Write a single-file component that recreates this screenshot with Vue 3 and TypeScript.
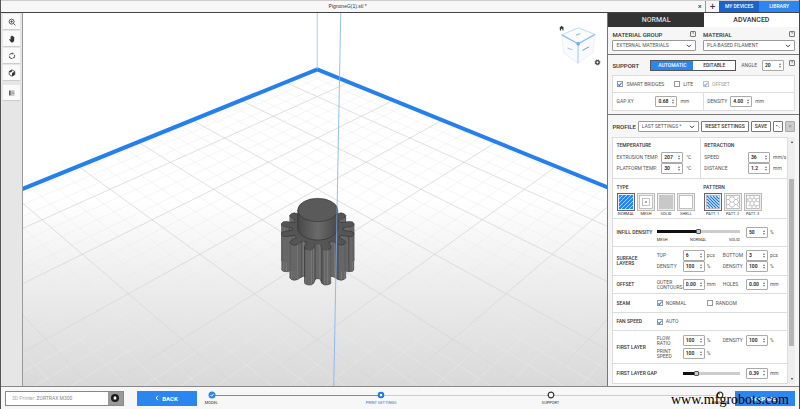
<script setup lang="ts">
import { h, ref } from 'vue'

type Pt = [number, number]

/* ---------- small shared controls ---------- */
const Spin = (props: { value: string; label: string }) =>
  h('span', { class: 'spin' }, [
    h('input', { type: 'text', inputmode: 'decimal', value: props.value, 'aria-label': props.label }),
    h('span', { class: 'spin-arrows' }, [
      h('button', { type: 'button', class: 'up', 'aria-label': props.label + ' up' }),
      h('button', { type: 'button', class: 'down', 'aria-label': props.label + ' down' }),
    ]),
  ])
Spin.props = ['value', 'label']

const printTypes = ['NORMAL', 'MESH', 'SOLID', 'SHELL']
const patterns = ['PATT. 1', 'PATT. 2', 'PATT. 3']
const activeType = ref('NORMAL')
const activePattern = ref('PATT. 1')
const infill = ref(50)
const gap = ref(22)

/* ---------- build plate grid in perspective ---------- */
const CORNER = 4.79
function project(u: number, v: number): Pt {
  const s = 1 / (0.00738 + 0.00057 * (u + v))
  return [317 + ((u - v) / 2) * s, -296 + s / 0.2133]
}
function gridPath(step: number): string {
  let d = ''
  for (let c = -5; c < CORNER; c += step) {
    const ends = [project(c, CORNER), project(c, -5), project(CORNER, c), project(-5, c)]
    const t = ends.map((p) => p[0].toFixed(1) + ' ' + p[1].toFixed(1))
    d += `M${t[0]}L${t[1]}M${t[2]}L${t[3]}`
  }
  return d
}
const minorGrid = gridPath(0.25)
const majorGrid = gridPath(1)

/* ---------- gear model ---------- */
const CX = 317.5
const CY = 229
const HEIGHT = 35
const profile: Pt[] = []
for (let k = 0; k < 12; k++) {
  for (const [off, r] of [[-11, 0.68], [-9, 0.76], [-8, 0.9], [-5, 0.98], [0, 1], [5, 0.98], [8, 0.9], [9, 0.76], [11, 0.68]]) {
    const a = ((15 + k * 30 + off) * Math.PI) / 180
    profile.push([CX + Math.sin(a) * r * 37.5, CY + Math.cos(a) * r * 21.5])
  }
}
const faces = profile
  .map((a, i) => {
    const b = profile[(i + 1) % profile.length]
    const dx = b[0] - a[0]
    const dy = b[1] - a[1]
    const facing = dx / Math.hypot(dx, dy)
    const tone = Math.round(78 + 26 * Math.abs(facing))
    return {
      facing,
      depth: (a[1] + b[1]) / 2,
      fill: `rgb(${tone},${tone},${tone})`,
      d: `M${a[0]} ${a[1]}L${b[0]} ${b[1]}V${b[1] + HEIGHT}L${a[0]} ${a[1] + HEIGHT}Z`,
      base: `M${a[0]} ${a[1] + HEIGHT}L${b[0]} ${b[1] + HEIGHT}`,
      edge: [2, 7].includes(i % 9) ? `M${a[0]} ${a[1]}v${HEIGHT}` : '',
    }
  })
  .filter((f) => f.facing > 0)
  .sort((a, b) => a.depth - b.depth)
const topFace = 'M' + profile.map((p) => p.map((n) => n.toFixed(2)).join(' ')).join('L') + 'Z'
</script>

<template>
  <div class="app">
    <header class="titlebar">
      <span class="file">PignoneG(1).stl *</span>
      <button class="tab-btn" type="button" aria-label="Close">×</button>
      <button class="tab-btn plus" type="button" aria-label="New">+</button>
      <button class="nav devices" type="button">MY DEVICES</button>
      <button class="nav library" type="button">LIBRARY</button>
    </header>

    <main class="work">
      <aside class="tools">
        <button type="button" aria-label="Zoom">
          <svg viewBox="0 0 8 8"><circle cx="3.6" cy="3.6" r="2.5" /><path d="M5.5 5.5 7.4 7.4M2.4 3.6h2.4M3.6 2.4v2.4" /></svg>
        </button>
        <button type="button" aria-label="Pan">
          <svg viewBox="0 0 8 8"><path class="solid" d="M2.6 4.4V1.4q.5-.5.9 0V.7q.5-.5.9 0v.6q.5-.5.9 0v.6q.6-.4.9.1v3.2Q6 7.2 4.5 7.4H3.4Q2.3 6.6 1.1 4.5q.5-.7 1.5-.1Z" /></svg>
        </button>
        <button type="button" aria-label="Rotate">
          <svg viewBox="0 0 8 8"><path d="M1.5 3.3A2.6 2.6 0 0 1 4.4 1.4M6.3 2.7A2.6 2.6 0 0 1 6 5.7M4.5 6.6A2.6 2.6 0 0 1 1.5 5" /><path class="solid" d="M4.3.5 5.9 1.5 4.3 2.5ZM6.9 5.2 5.2 5l.6 1.6ZM.8 5.7 2.5 5.2 1.4 3.9Z" /></svg>
        </button>
        <button type="button" aria-label="Perspective">
          <svg viewBox="0 0 8 8"><path d="M4 .9 6.8 2.4V5.6L4 7.2 1.2 5.6V2.4Z" /><path class="solid" d="M4 4 6.8 2.4V5.6L4 7.2ZM1.2 2.4 4 .9V2.6L2.4 3.5Z" /></svg>
        </button>
        <button class="gap-before" type="button" aria-label="Layers">
          <svg viewBox="0 0 8 8"><path class="bars" d="M1.5 1.5V6.5M2.8 1.5V6.5" /><path class="pale" d="M3.6 2H6.500M3.6 3.300H6.500M3.6 4.600H6.500M3.6 6H6.500" /></svg>
        </button>
      </aside>

      <section class="viewport">
        <svg class="scene" viewBox="23 13 584 373" preserveAspectRatio="xMidYMid slice">
          <defs>
            <linearGradient id="floor" x1="0" y1="0" x2="0" y2="1">
              <stop offset="0" stop-color="#fff" />
              <stop offset=".5" stop-color="#fff" />
              <stop offset=".78" stop-color="#e9e9e9" />
              <stop offset="1" stop-color="#d9d9d9" />
            </linearGradient>
            <linearGradient id="shaft" x1="0" x2="1">
              <stop offset="0" stop-color="#484848" />
              <stop offset=".5" stop-color="#6a6a6a" />
              <stop offset="1" stop-color="#484848" />
            </linearGradient>
          </defs>
          <rect x="23" y="13" width="584" height="373" fill="url(#floor)" />
          <path :d="minorGrid" class="minor" />
          <path :d="majorGrid" class="major" />
          <path d="M15 192 317 69.500 615 190.500" class="plate" />
          <path d="M317 13V69" class="axis" />
          <g class="gear">
            <template v-for="(f, i) in faces" :key="i">
              <path :d="f.d" :fill="f.fill" :stroke="f.fill" stroke-width=".3" />
              <path :d="f.base + f.edge" class="line" />
            </template>
            <path :d="topFace" fill="#555" class="line" />
            <path d="M297.500 210V228A20 12 0 0 0 337.500 228V210Z" fill="url(#shaft)" class="line" />
            <ellipse cx="317.500" cy="210" rx="20" ry="11.700" fill="#5a5a5a" class="line" />
          </g>
          <path d="M340.500 13 333.500 386" class="axis thin" />

          <g class="cube">
            <path class="body" d="M577.700 28 594.700 34.500 592.500 52.500 577.500 63.300 563.300 53.300 561.300 35Z" />
            <path class="rim" d="M561.300 35 577.700 44 594.700 34.500" />
            <path class="back" d="M561.300 35 577.700 28 594.700 34.500" />
            <path class="spine" d="M577.700 44 577.500 63.300" />
            <path class="mark" d="M575.500 35.300 580 33.700M567 48 572 50" />
            <path class="mark deep" d="M582 50.500 588.500 47" />
            <circle cx="577.700" cy="44" r="1.800" fill="#6eaaf0" />
          </g>
          <path class="ink" d="M558.800 28.200 561.200 25.800 563.600 28.200H563V30.600H561.900V28.800H560.600V30.600H559.400V28.200Z" />
          <circle cx="597" cy="62.500" r="1.700" fill="none" stroke="#333" stroke-width="1.300" />
          <circle cx="597" cy="62.500" r="2.500" fill="none" stroke="#333" stroke-width=".7" stroke-dasharray="1 .96" />
        </svg>
      </section>

      <aside class="panel">
        <div class="tabs">
          <button class="on" type="button">NORMAL</button>
          <button type="button">ADVANCED</button>
        </div>

        <section class="material">
          <div class="pick">
            <label for="group">MATERIAL GROUP</label><button class="help" type="button">?</button>
            <span class="select"><select id="group"><option>EXTERNAL MATERIALS</option></select><svg viewBox="0 0 6 4"><path d="M1 .8 3 2.800 5 .8" /></svg></span>
          </div>
          <div class="pick">
            <label for="mat">MATERIAL</label><button class="help" type="button">?</button>
            <span class="select"><select id="mat"><option>PLA-BASED FILAMENT</option></select><svg viewBox="0 0 6 4"><path d="M1 .8 3 2.800 5 .8" /></svg></span>
          </div>
        </section>

        <section class="support">
          <div class="support-head">
            <h2>SUPPORT</h2>
            <div class="segmented">
              <button class="on" type="button">AUTOMATIC</button><button type="button">EDITABLE</button>
            </div>
            <span class="txt">ANGLE</span>
            <Spin value="20" label="Angle" />
            <button class="help" type="button">?</button>
          </div>
          <div class="card">
            <div class="checks">
              <label class="txt"><input type="checkbox" checked />SMART BRIDGES</label>
              <label class="txt"><input type="checkbox" />LITE</label>
              <label class="txt dim"><input type="checkbox" checked disabled />OFFSET</label>
            </div>
            <div class="pair">
              <div><span class="txt name">GAP XY</span><Spin value="0.68" label="Gap XY" /><span class="txt">mm</span></div>
              <div><span class="txt">DENSITY</span><Spin value="4.00" label="Support density" /><span class="txt">mm</span></div>
            </div>
          </div>
        </section>

        <section class="profile">
          <div class="profile-head">
            <label for="profile">PROFILE</label>
            <span class="select"><select id="profile"><option>LAST SETTINGS *</option></select><svg viewBox="0 0 6 4"><path d="M1 .8 3 2.800 5 .8" /></svg></span>
            <button type="button">RESET SETTINGS</button>
            <button type="button">SAVE</button>
            <button class="sq" type="button" aria-label="More">•·.</button>
            <button class="sq off" type="button" aria-label="Delete">×</button>
          </div>

          <div class="scroller">
            <div class="list">
              <div class="split temps">
                <div>
                  <h3>TEMPERATURE</h3>
                  <div class="line3"><span class="txt">EXTRUSION TEMP.</span><Spin value="207" label="Extrusion temperature" /><span class="txt">°C</span></div>
                  <div class="line3"><span class="txt">PLATFORM TEMP.</span><Spin value="30" label="Platform temperature" /><span class="txt">°C</span></div>
                </div>
                <div>
                  <h3>RETRACTION</h3>
                  <div class="line3"><span class="txt">SPEED</span><Spin value="36" label="Speed" /><span class="txt">mm/s</span></div>
                  <div class="line3"><span class="txt">DISTANCE</span><Spin value="1.2" label="Distance" /><span class="txt">mm</span></div>
                </div>
              </div>

              <div class="split types">
                <div>
                  <h3>TYPE</h3>
                  <div class="tiles">
                    <button v-for="(t, i) in printTypes" :key="t" type="button" :class="{ on: t === activeType }" @click="activeType = t">
                      <svg viewBox="0 0 18 18">
                        <rect x=".5" y=".5" width="17" height="17" class="frame" />
                        <template v-if="i === 0">
                          <rect x="2" y="2" width="14" height="14" fill="#2b87ef" />
                          <path d="M2 6 6 2M2 10 10 2M2 14 14 2M4 16 16 4M8 16 16 8M12 16 16 12" stroke="#a9d0fa" />
                        </template>
                        <template v-else-if="i === 1">
                          <rect x="2.500" y="2.500" width="13" height="13" class="thin" />
                          <rect x="5.500" y="5.500" width="7" height="7" class="thin" />
                          <rect x="8" y="8" width="2" height="2" fill="#aaa" />
                        </template>
                        <rect v-else-if="i === 2" x="2" y="2" width="14" height="14" fill="#c8c8c8" />
                        <rect v-else x="2.500" y="2.500" width="13" height="13" class="thin" />
                      </svg>
                      <span>{{ t }}</span>
                    </button>
                  </div>
                </div>
                <div>
                  <h3>PATTERN</h3>
                  <div class="tiles">
                    <button v-for="(t, i) in patterns" :key="t" type="button" :class="{ on: t === activePattern }" @click="activePattern = t">
                      <svg viewBox="0 0 18 18">
                        <rect x=".5" y=".5" width="17" height="17" class="frame" />
                        <rect x="2.500" y="2.500" width="13" height="13" class="thin" />
                        <path v-if="i === 0" d="M3 12 6 15M3 9 9 15M3 6 12 15M3 3 15 15M6 3 15 12M9 3 15 9M12 3 15 6" stroke="#1f78e0" stroke-width="1.200" />
                        <path v-else-if="i === 1" d="M3 6.500H5L6.500 9 5 11.500H3M6.500 9H9.500M5 6.500 6.500 4 5.500 2.500M6.500 4H9.500L11 6.500 9.500 9 11 11.500 9.500 14H6.500L5 11.500M11 6.500H13L15 9 13 11.500H11M9.500 4 10.500 2.500M13 6.500 14.500 4M13 11.500 14.500 14" class="thin bare" />
                        <path v-else d="M6 3V5L4 6H3M6 5 8 6V8L6 9 4 8V6M8 6 10 5V3M10 5 12 6V8L10 9 8 8M12 6 15 5M4 8 3 9M6 9V12L4 13M6 12 8 13V15M10 9V12L8 13M10 12 12 13V15M12 8 15 9M12 13 15 12" class="thin bare" />
                      </svg>
                      <span>{{ t }}</span>
                    </button>
                  </div>
                </div>
              </div>

              <div class="row infill">
                <h3>INFILL DENSITY</h3>
                <div class="range wide">
                  <input v-model="infill" type="range" aria-label="Infill density" :style="{ '--fill': infill + '%' }" />
                  <div class="ticks"><span>MESH</span><span>NORMAL</span><span>SOLID</span></div>
                </div>
                <Spin value="50" label="Infill value" /><span class="txt">%</span>
              </div>

              <div class="row">
                <h3>SURFACE<br />LAYERS</h3>
                <span class="txt">TOP</span><Spin value="6" label="Top layers" /><span class="txt">pcs</span>
                <span class="txt">BOTTOM</span><Spin value="3" label="Bottom layers" /><span class="txt">pcs</span>
                <span class="txt second">DENSITY</span><Spin value="100" label="Top density" /><span class="txt">%</span>
                <span class="txt">DENSITY</span><Spin value="100" label="Bottom density" /><span class="txt">%</span>
              </div>

              <div class="row">
                <h3>OFFSET</h3>
                <span class="txt">OUTER<br />CONTOURS</span><Spin value="0.00" label="Outer contours" /><span class="txt">mm</span>
                <span class="txt">HOLES</span><Spin value="0.00" label="Holes" /><span class="txt">mm</span>
              </div>

              <div class="row tall">
                <h3>SEAM</h3>
                <label class="txt span2"><input type="checkbox" checked />NORMAL</label>
                <label class="txt span4"><input type="checkbox" />RANDOM</label>
              </div>

              <div class="row">
                <h3>FAN SPEED</h3>
                <label class="txt span2"><input type="checkbox" checked />AUTO</label>
              </div>

              <div class="row first">
                <h3>FIRST LAYER</h3>
                <span class="txt">FLOW<br />RATIO</span><Spin value="100" label="Flow ratio" /><span class="txt">%</span>
                <span class="txt">DENSITY</span><Spin value="100" label="First layer density" /><span class="txt">%</span>
                <span class="txt second">PRINT<br />SPEED</span><Spin value="100" label="Print speed" /><span class="txt">%</span>
              </div>

              <div class="row">
                <h3 class="span2">FIRST LAYER GAP</h3>
                <div class="range narrow">
                  <input v-model="gap" type="range" aria-label="First layer gap" :style="{ '--fill': gap + '%' }" />
                </div>
                <Spin value="0.39" label="Gap value" /><span class="txt">mm</span>
              </div>
            </div>
            <div class="bar"><i class="arrow up" /><i class="track"><i class="thumb" /></i><i class="arrow down" /></div>
          </div>
        </section>
      </aside>
    </main>

    <footer class="footer">
      <div class="printer">
        <span><em>3D Printer:</em> ZORTRAX M300</span>
        <button type="button" aria-label="Printer settings">
          <svg viewBox="0 0 10 10"><circle cx="5" cy="5" r="4" fill="#1c1c1c" /><path d="M5 3 6.300 4.300V6.500H3.700V4.300Z" fill="#fff" /></svg>
        </button>
      </div>
      <button class="action back" type="button">
        <svg viewBox="0 0 4 6"><path d="M3 .8 1 3 3 5.200" /></svg>BACK
      </button>
      <ol class="steps">
        <li>
          <svg viewBox="0 0 8 8"><circle cx="4" cy="4" r="3.500" fill="#2b87ef" /><path d="M2.500 4 3.600 5.200 5.600 2.900" fill="none" stroke="#fff" /></svg>
          <span>MODEL</span>
        </li>
        <li class="now">
          <svg viewBox="0 0 8 8"><circle cx="4" cy="4" r="2.300" fill="#fff" stroke="#1f78e0" stroke-width="2" /></svg>
          <span>PRINT SETTINGS</span>
        </li>
        <li>
          <svg viewBox="0 0 8 8"><circle cx="4" cy="4" r="2.800" fill="#fff" stroke="#333" stroke-width="1.200" /></svg>
          <span>SUPPORT</span>
        </li>
        <li>
          <svg viewBox="0 0 8 8"><circle cx="4" cy="4" r="2.800" fill="#fff" stroke="#333" stroke-width="1.200" /></svg>
          <span>PREVIEW</span>
        </li>
      </ol>
      <button class="action" type="button">PREPARE ›</button>
      <span class="watermark">www.mfgrobots.com</span>
    </footer>
  </div>
</template>

<style>
body {
  margin: 0;
}
.spin {
  display: flex;
  box-sizing: border-box;
  width: 22px;
  height: 11px;
  border: 1px solid #aaa;
  border-radius: 1px;
  background: #fff;
}
.spin input {
  flex: 1;
  min-width: 0;
  padding: 0 0 0 2px;
  border: 0;
  background: none;
  color: #222;
  font: 600 5px/9px Roboto, sans-serif;
  outline: 0;
}
.spin-arrows {
  display: flex;
  flex-direction: column;
  justify-content: space-evenly;
  width: 4px;
}
.spin-arrows button {
  width: 0;
  height: 0;
  padding: 0;
  border: 1px solid transparent;
  background: none;
}
.spin-arrows .up {
  border-bottom: 2px solid #777;
  border-top: 0;
}
.spin-arrows .down {
  border-top: 2px solid #777;
  border-bottom: 0;
}
</style>

<style scoped>
.app {
  display: flex;
  flex-direction: column;
  box-sizing: border-box;
  min-height: 100vh;
  border-left: 1px solid #555;
  border-right: 1px solid #444;
  background: #f7f7f7;
  color: #333;
  font: 5px/7px Roboto, sans-serif;
}
button {
  padding: 0;
  border: 0;
  background: none;
  color: inherit;
  font: inherit;
}
h2,
h3 {
  margin: 0;
  color: #333;
  font-size: 5px;
  font-weight: 500;
}
h3 {
  line-height: 5px;
  white-space: nowrap;
}

/* title bar */
.titlebar {
  display: flex;
  align-items: stretch;
  height: 11px;
  border-top: 1px solid #ccc;
  border-bottom: 1px solid #444;
}
.file {
  flex: 1;
  text-align: center;
  font: 5px/11px 'Liberation Sans', sans-serif;
}
.tab-btn {
  width: 11px;
  font: 600 7px/11px 'Open Sans', sans-serif;
}
.plus {
  width: 14px;
  border-left: 1px solid #999;
  font-size: 10px;
}
.nav {
  width: 5%;
  color: #fff;
  font-weight: 500;
}
.devices {
  background: #1866cc;
}
.library {
  background: #2b87ef;
}

.work {
  display: flex;
  flex: 1;
  min-height: 0;
}

/* left tools */
.tools {
  display: flex;
  flex-direction: column;
  gap: 1px;
  box-sizing: border-box;
  width: 22px;
  padding: 1px 2px;
  border-right: 1px solid #999;
  background: #e6e6e6;
}
.tools button {
  display: grid;
  place-items: center;
  height: 16px;
  border-bottom: 1px solid #ccc;
  background: #fafafa;
  box-sizing: border-box;
}
.tools .gap-before {
  margin-top: 3px;
}
.tools svg {
  width: 8px;
  height: 8px;
  fill: none;
  stroke: #333;
  stroke-width: 0.8;
}
.tools .solid {
  fill: #333;
  stroke: none;
}
.tools .pale {
  stroke: #888;
}

/* 3D scene */
.viewport {
  position: relative;
  flex: 1;
  min-width: 0;
  background: #fff;
}
.scene {
  position: absolute;
  inset: 0;
  width: 100%;
  height: 100%;
}
.minor {
  fill: none;
  stroke: #ebebeb;
  stroke-width: 0.5;
}
.major {
  fill: none;
  stroke: #cdcdcd;
  stroke-width: 0.5;
}
.plate {
  fill: none;
  stroke: #2680ec;
  stroke-width: 4;
}
.axis {
  fill: none;
  stroke: #a3cdf7;
}
.thin.axis {
  stroke: #78b0ee;
  stroke-width: 0.8;
}
.gear .line {
  stroke: #262626;
  stroke-width: 0.5;
}
.cube path {
  fill: none;
}
.cube .body {
  fill: #f9fbff;
  stroke: #e3edf8;
  stroke-width: 0.8;
}
.cube .rim {
  stroke: #8cbdf0;
  stroke-width: 1.2;
}
.cube .back {
  stroke: #bcd8f5;
  stroke-width: 0.8;
}
.cube .spine {
  stroke: #b4d3f6;
  stroke-width: 1.3;
}
.cube .mark {
  stroke: #9abbdd;
}
.cube .deep {
  stroke: #6d9ccc;
}
.ink {
  fill: #333;
}

/* settings panel */
.panel {
  display: flex;
  flex-direction: column;
  box-sizing: border-box;
  width: 24%;
  border-left: 1px solid #777;
  background: #f6f6f6;
}
.tabs {
  display: flex;
  height: 14px;
}
.tabs button {
  flex: 1;
  background: #fff;
  font-size: 7px;
  font-weight: 500;
}
.tabs .on {
  background: #333;
  color: #ddd;
}
.material {
  display: flex;
  gap: 7px;
  padding: 4px 4px 3px;
  border-bottom: 1px solid #777;
}
.pick {
  display: grid;
  flex: 11;
  grid-template-columns: 1fr auto;
  row-gap: 2px;
}
.pick:first-child {
  flex: 10;
}
.pick label,
.profile-head label,
h2 {
  font-size: 6px;
  font-weight: 500;
}
.help {
  width: 6px;
  height: 6px;
  box-sizing: border-box;
  border: 1px solid #777;
  border-radius: 1px;
  font-size: 4px;
  line-height: 4px;
}
.select {
  display: flex;
  align-items: center;
  box-sizing: border-box;
  min-width: 0;
  height: 11px;
  border: 1px solid #999;
  border-radius: 1px;
  background: #fff;
}
.pick .select {
  grid-column: 1 / 3;
}
select {
  flex: 1;
  min-width: 0;
  padding: 0 0 0 3px;
  border: 0;
  background: none;
  color: #555;
  font: 5px/9px Roboto, sans-serif;
  appearance: none;
}
.select svg {
  width: 6px;
  height: 4px;
  margin-right: 3px;
  fill: none;
  stroke: #333;
}
.txt {
  color: #555;
  line-height: 5px;
}
.support {
  padding: 5px 4px 3px;
  border-bottom: 1px solid #777;
}
.support-head {
  display: flex;
  align-items: center;
  gap: 5px;
}
.support-head .help {
  align-self: flex-start;
}
.support-head h2 {
  flex: 1;
}
.segmented {
  display: flex;
  width: 47%;
  height: 11px;
  box-sizing: border-box;
  border: 1px solid #555;
  background: #fff;
}
.segmented button {
  flex: 1;
  font-weight: 500;
}
.segmented .on {
  background: #2b87ef;
  color: #fff;
}
.card {
  margin-top: 4px;
  border: 1px solid #ddd;
  background: #fff;
}
.checks {
  display: flex;
  align-items: center;
  gap: 10px;
  height: 16px;
  padding-left: 4px;
  border-bottom: 1px solid #ddd;
}
label.txt {
  display: flex;
  align-items: center;
  gap: 3px;
}
input[type='checkbox'] {
  display: grid;
  place-items: center;
  width: 6px;
  height: 6px;
  margin: 0;
  border: 1px solid #999;
  background: #fff;
  appearance: none;
  box-sizing: border-box;
}
input[type='checkbox']:checked::after {
  content: '';
  width: 1px;
  height: 3px;
  border: solid #1f78e0;
  border-width: 0 1px 1px 0;
  transform: rotate(40deg);
}
.dim {
  opacity: 0.6;
}
.pair {
  display: flex;
}
.pair div {
  display: flex;
  flex: 1;
  align-items: center;
  gap: 3px;
  height: 17px;
  padding-left: 3px;
}
.pair div + div {
  border-left: 1px solid #ddd;
}
.pair .name {
  width: 36px;
}

.profile {
  display: flex;
  flex: 1;
  flex-direction: column;
  padding: 6px 4px 2px;
}
.profile-head {
  display: flex;
  align-items: center;
  gap: 2px;
  margin-bottom: 5px;
}
.profile-head .select {
  flex: 1;
}
.profile-head button {
  height: 11px;
  padding: 0 3px;
  box-sizing: border-box;
  border: 1px solid #777;
  border-radius: 1px;
  background: #fff;
  font-weight: 500;
}
.profile-head .sq {
  width: 10px;
  padding: 0;
}
.profile-head .off {
  border-color: #aaa;
  background: #ccc;
  color: #888;
}
.scroller {
  display: flex;
  flex: 1;
}
.list {
  flex: 1;
  min-width: 0;
  border: 1px solid #ddd;
  background: #fff;
}
.bar {
  display: flex;
  flex-direction: column;
  align-items: center;
  width: 7px;
  background: #eee;
}
.bar .track {
  flex: 1;
  width: 5px;
}
.thumb {
  display: block;
  height: 73%;
  margin-top: 33px;
  background: #b5b5b5;
}
.arrow {
  width: 0;
  margin: 3px 0;
  border: 1px solid transparent;
}
.arrow.up {
  border-bottom: 2px solid #333;
}
.arrow.down {
  border-top: 2px solid #333;
}
.split {
  display: grid;
  grid-template-columns: 1fr 1fr;
  border-bottom: 1px solid #ddd;
}
.split > div {
  padding-left: 3px;
}
.temps > div {
  padding-top: 5px;
  padding-bottom: 4px;
}
.temps > div + div {
  border-left: 1px solid #ddd;
}
.line3 {
  display: grid;
  grid-template-columns: 1fr 22px 14px;
  align-items: center;
  column-gap: 3px;
  white-space: nowrap;
}
.temps h3 {
  margin-bottom: 4px;
}
.types > div {
  padding-top: 6px;
  padding-bottom: 1px;
}
.tiles {
  display: flex;
  gap: 1px;
  margin-top: 3px;
}
.tiles button {
  display: flex;
  flex-direction: column;
  align-items: center;
  width: 19px;
}
.tiles svg {
  width: 18px;
  height: 18px;
  fill: none;
}
.tiles span {
  font-size: 4px;
  line-height: 6px;
}
.frame {
  fill: #eee;
  stroke: #bbb;
}
.on .frame {
  stroke: #666;
}
.tiles .thin {
  fill: #fff;
  stroke: #aaa;
  stroke-width: 0.7;
}
.tiles .bare {
  fill: none;
}
.row {
  display: grid;
  grid-template-columns:
    minmax(0, 38fr) minmax(0, 24fr) 22px minmax(0, 14fr)
    minmax(0, 21fr) 22px minmax(0, 17fr);
  align-items: center;
  column-gap: 2px;
  min-height: 18px;
  padding-left: 3px;
  box-sizing: border-box;
  border-bottom: 1px solid #ddd;
}
.row:last-child {
  border-bottom: 0;
}
.row:has(.second) {
  padding-top: 3px;
  padding-bottom: 3px;
}
.row:has(.second) h3 {
  grid-row: 1 / 3;
}
.second {
  grid-column: 2;
}
.tall {
  min-height: 19px;
}
.first {
  min-height: 33px;
}
.infill {
  min-height: 28px;
}
.span2 {
  grid-column: span 2;
}
.span4 {
  grid-column: span 4;
}
.range {
  padding-right: 4px;
}
.wide {
  grid-column: span 4;
  padding-top: 6px;
}
.narrow {
  grid-column: span 3;
}
.range input {
  display: block;
  width: 100%;
  height: 5px;
  margin: 0;
  background: linear-gradient(to right, #111 var(--fill), #ccc var(--fill)) center / 100% 3px no-repeat;
  appearance: none;
}
.range input::-webkit-slider-thumb {
  width: 5px;
  height: 5px;
  border: 1px solid #555;
  border-radius: 1px;
  background: #ccc;
  appearance: none;
  box-sizing: border-box;
}
.ticks {
  display: flex;
  justify-content: space-between;
  margin-top: 3px;
  font-size: 4px;
  line-height: 5px;
}

/* footer */
.footer {
  position: relative;
  display: flex;
  align-items: center;
  height: 22px;
  padding: 0 4px;
  border-top: 1px solid #888;
}
.printer {
  display: flex;
  align-items: center;
  width: 15%;
  height: 15px;
  margin-right: 13px;
  box-sizing: border-box;
  border: 1px solid #888;
  background: #fff;
}
.printer span {
  flex: 1;
  padding-left: 6px;
  color: #888;
}
.printer em {
  color: #aaa;
  font-style: normal;
}
.printer button {
  display: grid;
  place-items: center;
  width: 15px;
  height: 100%;
  background: #999;
}
.printer svg {
  width: 10px;
  height: 10px;
}
.action {
  display: flex;
  align-items: center;
  justify-content: center;
  gap: 3px;
  width: 60px;
  height: 15px;
  background: #2b87ef;
  color: #fff;
  font-size: 6px;
  font-weight: 700;
}
.action svg {
  width: 4px;
  height: 6px;
  fill: none;
  stroke: #fff;
}
.steps {
  display: flex;
  flex: 1;
  justify-content: space-between;
  margin: 0 15px;
  padding: 0;
  background: linear-gradient(to right, #4a98ee 33%, #ccc 33%) 0 4px / 100% 1px no-repeat;
  list-style: none;
  font-size: 4px;
  line-height: 5px;
}
.steps li {
  display: flex;
  flex-direction: column;
  align-items: center;
  gap: 1px;
  width: 0;
  white-space: nowrap;
}
.steps svg {
  flex: none;
  width: 8px;
  height: 8px;
}
.now span {
  color: #1f78e0;
}
.watermark {
  position: absolute;
  right: 10px;
  bottom: 0;
  color: #000;
  font: 14px/18px 'Liberation Serif', serif;
}
</style>
